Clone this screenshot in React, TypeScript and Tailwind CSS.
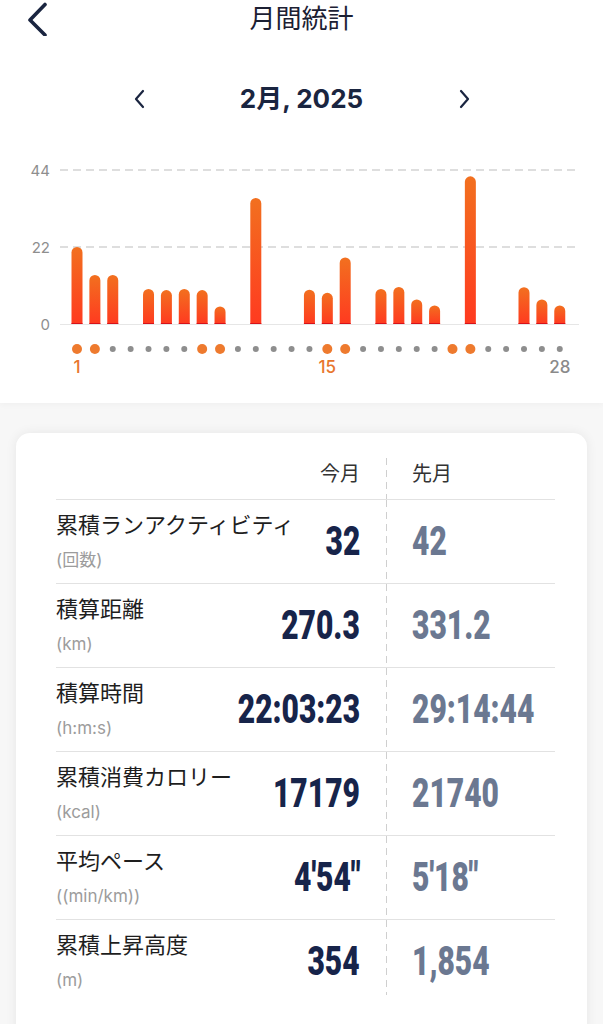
import React from "react";

const bars: number[] = [22, 14, 14, 0, 10, 9.7, 10, 9.7, 5, 0, 36, 0, 0, 9.8, 8.9, 19, 0, 10, 10.6, 7, 5.3, 0, 42.2, 0, 0, 10.5, 7, 5.3];
const weekend = new Set([1, 2, 8, 9, 15, 16, 22, 23]);

const dayX = (n: number) => 77 + (n - 1) * 17.88;
const BASE = 174;
const UNIT = 3.5;

function Chart() {
  return (
    <svg width="603" height="240" viewBox="0 0 603 240" className="block">
      <defs>
        <linearGradient id="barg" x1="0" y1="0" x2="0" y2="1">
          <stop offset="0" stopColor="#f2701f" />
          <stop offset="1" stopColor="#ff3a20" />
        </linearGradient>
      </defs>
      <g fontFamily="Inter, 'Noto Sans', sans-serif" fontSize="15" fill="#8e8e8e">
        <text x="50" y="20" textAnchor="end" dominantBaseline="central">44</text>
        <text x="50" y="97" textAnchor="end" dominantBaseline="central">22</text>
        <text x="50" y="174" textAnchor="end" dominantBaseline="central">0</text>
      </g>
      <line x1="60" y1="20" x2="579" y2="20" stroke="#bdbdbd" strokeWidth="1" strokeDasharray="8 5" />
      <line x1="60" y1="97" x2="579" y2="97" stroke="#bdbdbd" strokeWidth="1" strokeDasharray="8 5" />
      <line x1="60" y1="174.5" x2="579" y2="174.5" stroke="#e6e6e6" strokeWidth="1" />
      {bars.map((v, i) => {
        if (!v) return null;
        const x = dayX(i + 1);
        const h = v * UNIT;
        const top = BASE - h;
        const r = 5.5;
        return (
          <g key={i}>
            <path
              d={`M${x - r},${BASE} V${top + r} A${r},${r} 0 0 1 ${x + r},${top + r} V${BASE} Z`}
              fill="url(#barg)"
            />
            <rect x={x - r} y={BASE - 1} width={r * 2} height={1} fill="#d8121a" />
          </g>
        );
      })}
      {bars.map((_, i) => {
        const d = i + 1;
        const x = dayX(d);
        return weekend.has(d) ? (
          <circle key={"d" + i} cx={x} cy={199} r={5} fill="#ee7a2e" />
        ) : (
          <circle key={"d" + i} cx={x} cy={199} r={3} fill="#8e8e8e" />
        );
      })}
      <g fontFamily="Inter, 'Noto Sans', sans-serif" fontSize="17" fontWeight="500">
        <text x={dayX(1)} y="217" textAnchor="middle" dominantBaseline="central" fill="#e8762d">1</text>
        <text x={dayX(15)} y="217" textAnchor="middle" dominantBaseline="central" fill="#e8762d">15</text>
        <text x={dayX(28)} y="217" textAnchor="middle" dominantBaseline="central" fill="#8a8a8a">28</text>
      </g>
    </svg>
  );
}

type Row = { label: string; unit: string; cur: string; prev: string };
const rows: Row[] = [
  { label: "累積ランアクティビティ", unit: "(回数)", cur: "32", prev: "42" },
  { label: "積算距離", unit: "(km)", cur: "270.3", prev: "331.2" },
  { label: "積算時間", unit: "(h:m:s)", cur: "22:03:23", prev: "29:14:44" },
  { label: "累積消費カロリー", unit: "(kcal)", cur: "17179", prev: "21740" },
  { label: "平均ペース", unit: "((min/km))", cur: "4′54″", prev: "5′18″" },
  { label: "累積上昇高度", unit: "(m)", cur: "354", prev: "1,854" },
];

const Divider = ({ className = "" }: { className?: string }) => (
  <div
    className={
      "w-px shrink-0 self-stretch bg-[linear-gradient(#cfcfcf_60%,transparent_60%)] bg-[length:1px_12px] bg-repeat-y " +
      className
    }
  />
);

export default function App() {
  return (
    <div className="w-[603px] min-h-[1024px] bg-[#f7f7f7] font-['Inter','Noto_Sans_CJK_JP',sans-serif] text-[#1a2238]">
      <div className="h-[403px] bg-white flex flex-col shadow-[0_2px_6px_rgba(0,0,0,0.03)]">
        <div className="h-[38px] flex items-center justify-between px-[26px]">
          <svg width="22" height="34" viewBox="0 0 22 34" className="block">
            <path d="M19 2.5 L4 18 L19 33" fill="none" stroke="#1a2540" strokeWidth="3.6" strokeLinecap="round" strokeLinejoin="round" />
          </svg>
          <div className="text-[26px] leading-[38px] text-[#1c2033] font-normal">月間統計</div>
          <div className="w-[22px]" />
        </div>
        <div className="mt-[41px] h-[40px] flex items-center justify-center">
          <svg width="14" height="22" viewBox="0 0 14 22" className="block">
            <path d="M11 3 L4 11 L11 19" fill="none" stroke="#1a2540" strokeWidth="2.2" strokeLinecap="round" strokeLinejoin="round" />
          </svg>
          <div className="w-[312px] text-center text-[26px] font-bold leading-[40px] text-[#1a2540]">2月, 2025</div>
          <svg width="14" height="22" viewBox="0 0 14 22" className="block">
            <path d="M3 3 L10 11 L3 19" fill="none" stroke="#1a2540" strokeWidth="2.2" strokeLinecap="round" strokeLinejoin="round" />
          </svg>
        </div>
        <div className="mt-[31px]">
          <Chart />
        </div>
      </div>

      <div className="pt-[30px] px-[16px]">
        <div className="bg-white rounded-[14px] shadow-[0_0_12px_rgba(0,0,0,0.07)] pl-[40px] pr-[32px] pb-[40px]">
          <div className="h-[67px] flex border-b border-[#e2e2e2]">
            <div className="w-[330px] shrink-0 pr-[26px] flex justify-end pt-[28px]">
              <span className="text-[20px] leading-[26px] text-[#333]">今月</span>
            </div>
            <Divider className="mt-[25px]" />
            <div className="flex-1 min-w-0 pl-[25px] pt-[28px]">
              <span className="text-[20px] leading-[26px] text-[#333]">先月</span>
            </div>
          </div>
          {rows.map((r, i) => (
            <div
              key={i}
              className={
                "h-[84px] flex " + (i < rows.length - 1 ? "border-b border-[#e2e2e2]" : "")
              }
            >
              <div className="w-[330px] shrink-0 pr-[26px] flex items-start justify-between">
                <div className="flex flex-col pt-[10px] whitespace-nowrap">
                  <span className="text-[22px] leading-[30px] text-[#1e1e1e]">{r.label}</span>
                  <span className="mt-[8px] text-[17px] leading-[24px] text-[#9c9c9c]">{r.unit}</span>
                </div>
                <div className="self-center whitespace-nowrap">
                  <span className="inline-block origin-right scale-x-[0.75] font-['Roboto',sans-serif] font-black text-[40px] leading-none text-[#17244a]">
                    {r.cur}
                  </span>
                </div>
              </div>
              <Divider className={i === rows.length - 1 ? "mb-[9px]" : ""} />
              <div className="flex-1 min-w-0 pl-[25px] flex items-center whitespace-nowrap">
                <span className="inline-block origin-left scale-x-[0.75] font-['Roboto',sans-serif] font-black text-[40px] leading-none text-[#6b7891]">
                  {r.prev}
                </span>
              </div>
            </div>
          ))}
        </div>
      </div>
    </div>
  );
}
